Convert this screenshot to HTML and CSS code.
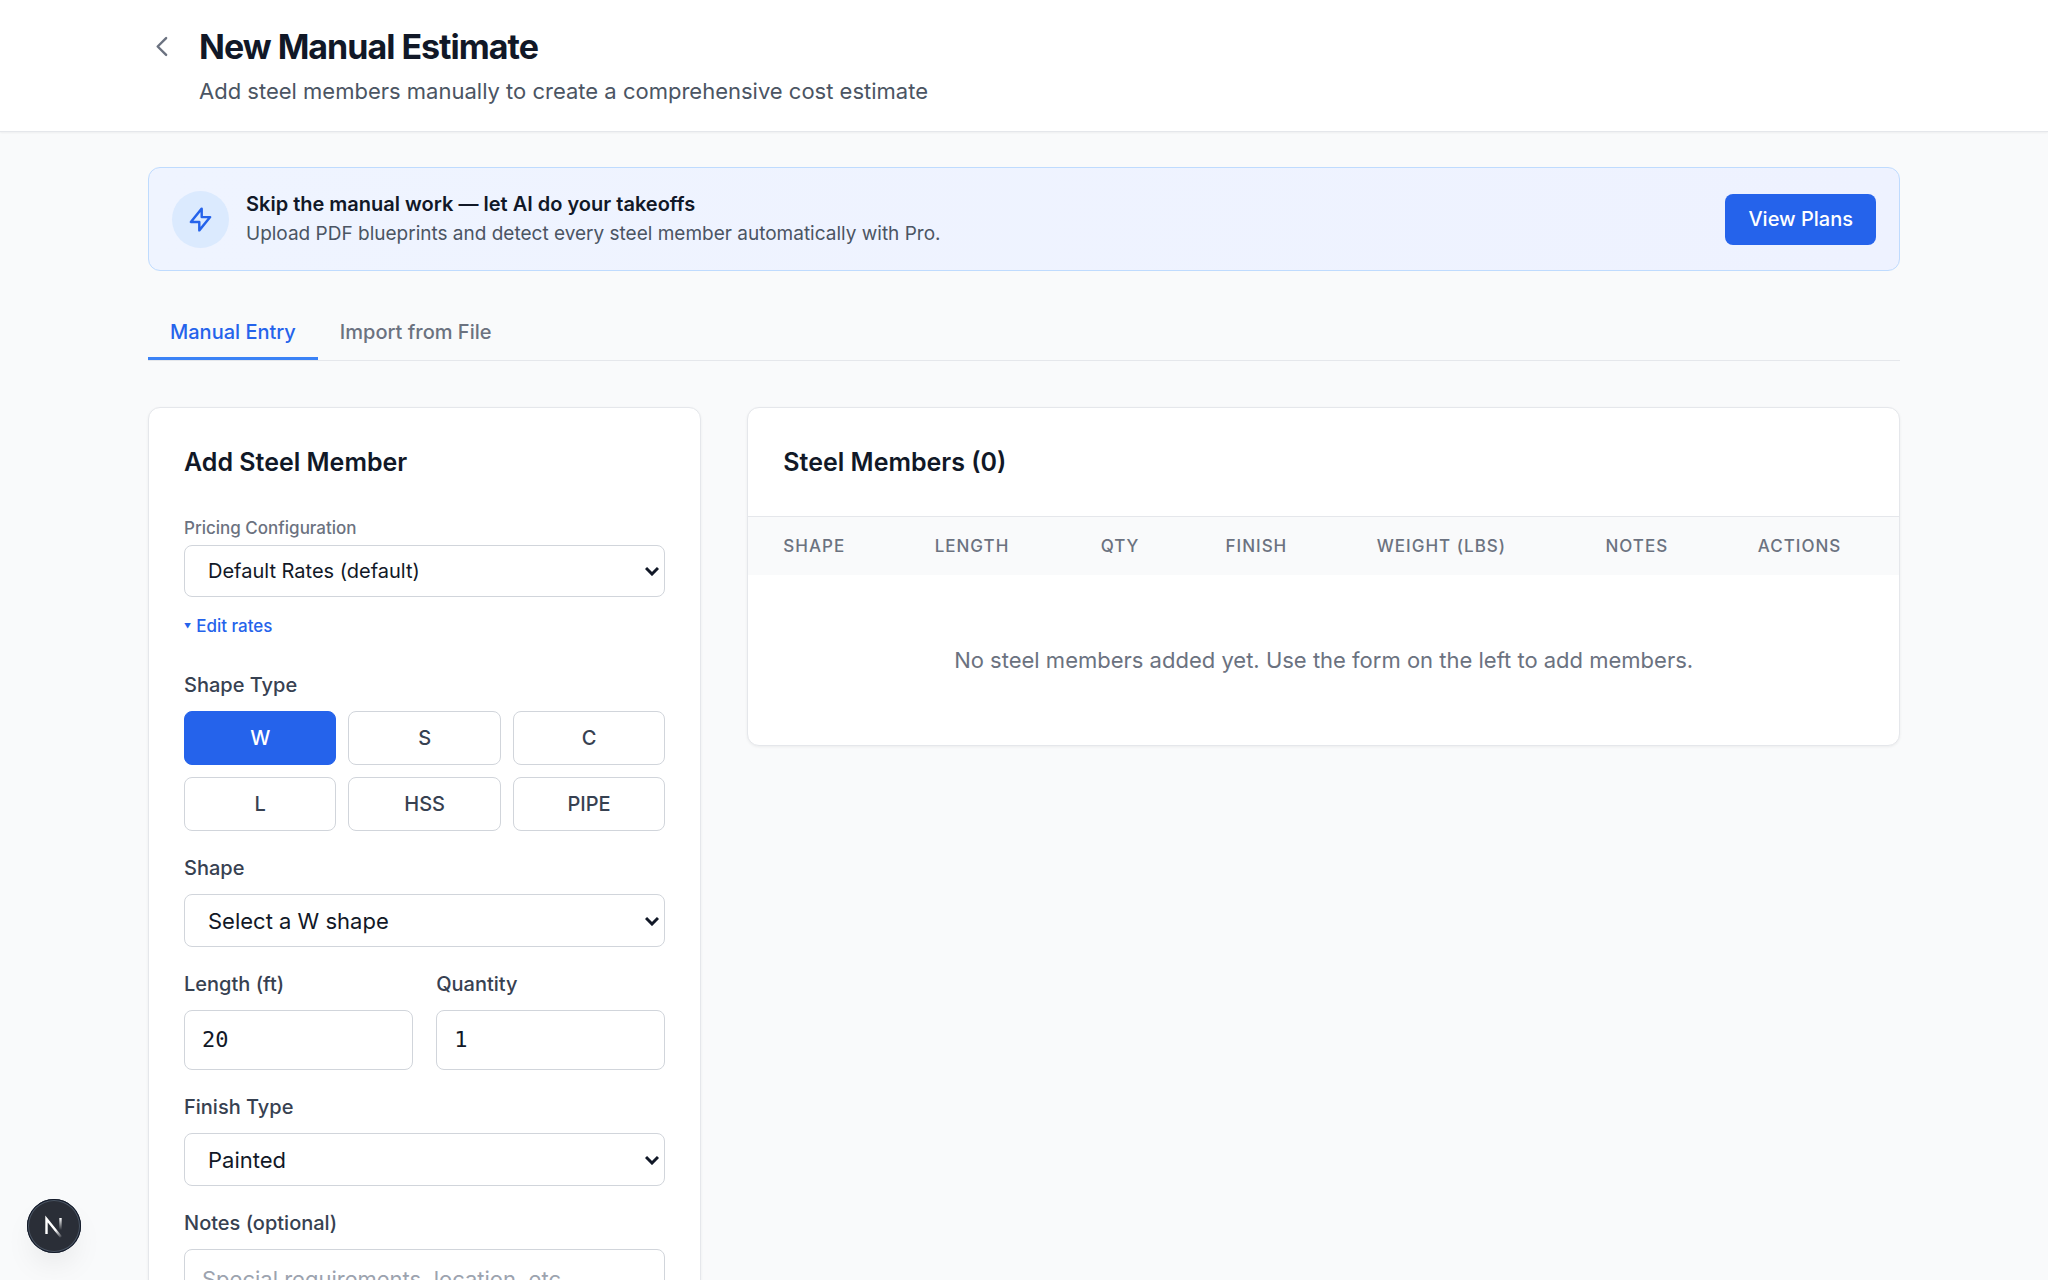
FILE: index.html
```html
<!DOCTYPE html>
<html lang="en">
<head>
    <meta charset="UTF-8">
    <meta name="viewport" content="width=device-width, initial-scale=1.0">
    <title>New Manual Estimate</title>
    <link rel="stylesheet" href="styles.css">
</head>
<body>
    <header class="page-header">
        <div class="container header-inner">
            <a href="#" class="back-link" aria-label="Back">
                <svg width="29" height="29" viewBox="0 0 24 24" fill="none" stroke="currentColor" stroke-width="2" stroke-linecap="round" stroke-linejoin="round"><path d="M15 19l-7-7 7-7"/></svg>
            </a>
            <div>
                <h1>New Manual Estimate</h1>
                <p class="subtitle">Add steel members manually to create a comprehensive cost estimate</p>
            </div>
        </div>
    </header>

    <main class="container">
        <section class="banner">
            <span class="banner-icon">
                <svg width="29" height="29" viewBox="0 0 24 24" fill="none" stroke="currentColor" stroke-width="2" stroke-linecap="round" stroke-linejoin="round"><path d="M13 10V3L4 14h7v7l9-11h-7z"/></svg>
            </span>
            <div class="banner-text">
                <p class="banner-title">Skip the manual work — let AI do your takeoffs</p>
                <p>Upload PDF blueprints and detect every steel member automatically with Pro.</p>
            </div>
            <a href="#" class="plans-link">View Plans</a>
        </section>

        <nav class="tabs">
            <button type="button" class="tab active">Manual Entry</button>
            <button type="button" class="tab">Import from File</button>
        </nav>

        <div class="columns">
            <form class="card form-card">
                <h2>Add Steel Member</h2>

                <label class="small-label" for="pricing">Pricing Configuration</label>
                <select id="pricing" class="pricing-select">
                    <option>Default Rates (default)</option>
                </select>
                <button type="button" class="edit-rates"><span class="caret">▼</span>Edit rates</button>

                <div class="field">
                    <span class="label" id="shape-type">Shape Type</span>
                    <div class="shape-grid" role="group" aria-labelledby="shape-type">
                        <button type="button" class="shape-btn selected">W</button>
                        <button type="button" class="shape-btn">S</button>
                        <button type="button" class="shape-btn">C</button>
                        <button type="button" class="shape-btn">L</button>
                        <button type="button" class="shape-btn">HSS</button>
                        <button type="button" class="shape-btn">PIPE</button>
                    </div>
                </div>

                <div class="field">
                    <label class="label" for="shape">Shape</label>
                    <select id="shape">
                        <option>Select a W shape</option>
                    </select>
                </div>

                <div class="field-row">
                    <div class="field">
                        <label class="label" for="length">Length (ft)</label>
                        <input type="text" inputmode="decimal" id="length" value="20">
                    </div>
                    <div class="field">
                        <label class="label" for="quantity">Quantity</label>
                        <input type="text" inputmode="numeric" id="quantity" value="1">
                    </div>
                </div>

                <div class="field">
                    <label class="label" for="finish">Finish Type</label>
                    <select id="finish">
                        <option>Painted</option>
                        <option>Galvanized</option>
                    </select>
                </div>

                <div class="field">
                    <label class="label" for="notes">Notes (optional)</label>
                    <textarea id="notes" rows="3" placeholder="Special requirements, location, etc."></textarea>
                </div>
            </form>

            <section class="card members-card">
                <h2>Steel Members (0)</h2>
                <table>
                    <thead>
                        <tr>
                            <th>SHAPE</th>
                            <th>LENGTH</th>
                            <th>QTY</th>
                            <th>FINISH</th>
                            <th>WEIGHT (LBS)</th>
                            <th>NOTES</th>
                            <th>ACTIONS</th>
                        </tr>
                    </thead>
                    <tbody>
                        <tr>
                            <td colspan="7">No steel members added yet. Use the form on the left to add members.</td>
                        </tr>
                    </tbody>
                </table>
            </section>
        </div>
    </main>

    <button type="button" class="dev-badge" aria-label="Open dev tools">
        <svg width="54" height="54" viewBox="0 0 54 54" fill="none">
            <defs>
                <linearGradient id="diag" x1="30" y1="30" x2="36" y2="38" gradientUnits="userSpaceOnUse">
                    <stop stop-color="#fff"/>
                    <stop offset="1" stop-color="#fff" stop-opacity="0"/>
                </linearGradient>
                <linearGradient id="stem" x1="33" y1="19" x2="33" y2="31" gradientUnits="userSpaceOnUse">
                    <stop stop-color="#fff"/>
                    <stop offset="1" stop-color="#fff" stop-opacity="0"/>
                </linearGradient>
            </defs>
            <path d="M19.500 35V20L34 38" stroke="url(#diag)" stroke-width="2.400"/>
            <path d="M33.500 19v13" stroke="url(#stem)" stroke-width="2.400"/>
        </svg>
    </button>
</body>
</html>
```
FILE: styles.css
```css
* {
    box-sizing: border-box;
}
body {
    margin: 0;
    background-color: #f9fafb;
    color: #111827;
    font-family: Inter, "Liberation Sans", sans-serif;
    font-size: 22px;
    line-height: 35px;
}
h1, h2, p {
    margin: 0;
}
button, select, input, textarea {
    font: inherit;
    color: inherit;
}
button {
    cursor: pointer;
}
.container {
    width: 86%;
    max-width: 1752px;
    margin: 0 auto;
}

/* header */
.page-header {
    background: #fff;
    border-bottom: 1px solid #e5e7eb;
    box-shadow: 0 1px 2px rgba(0, 0, 0, 0.05);
    padding: 23px 0 22px;
}
.header-inner {
    display: flex;
    align-items: flex-start;
    gap: 22px;
}
.back-link {
    display: flex;
    align-items: center;
    height: 46px;
    color: #6b7280;
}
h1 {
    font-size: 34px;
    line-height: 47px;
    font-weight: 700;
    letter-spacing: -1px;
}
.subtitle {
    margin-top: 4px;
    color: #4b5563;
}

/* upgrade banner */
.banner {
    display: flex;
    align-items: center;
    gap: 17px;
    margin-top: 35px;
    padding: 22px 23px;
    border: 1px solid #bfdbfe;
    border-radius: 12px;
    background: linear-gradient(to right, #eff4ff, #eef2ff);
    font-size: 19px;
    line-height: 29px;
    color: #4b5563;
}
.banner-icon {
    display: flex;
    align-items: center;
    justify-content: center;
    width: 57px;
    height: 57px;
    border-radius: 50%;
    background: #dbeafe;
    color: #2563eb;
}
.banner-text {
    flex: 1;
}
.banner-title {
    font-size: 20px;
    font-weight: 600;
    color: #111827;
}
.plans-link {
    padding: 11px 23px;
    border-radius: 8px;
    background: #2563eb;
    color: #fff;
    font-size: 20px;
    font-weight: 500;
    text-decoration: none;
}

/* tabs */
.tabs {
    display: flex;
    margin: 35px 0 46px;
    border-bottom: 1px solid #e5e7eb;
}
.tab {
    padding: 12px 22px 10px;
    border: none;
    border-bottom: 3px solid transparent;
    background: none;
    font-size: 20px;
    line-height: 29px;
    font-weight: 500;
    color: #6b7280;
}
.tab.active {
    border-bottom-color: #3b82f6;
    color: #2563eb;
}

/* cards */
.columns {
    display: grid;
    grid-template-columns: repeat(3, 1fr);
    gap: 46px;
    align-items: start;
    padding-bottom: 46px;
}
.card {
    background: #fff;
    border: 1px solid #e5e7eb;
    border-radius: 12px;
    box-shadow: 0 1px 3px rgba(0, 0, 0, 0.06);
}
h2 {
    font-size: 25px;
    line-height: 38px;
    font-weight: 600;
}
.form-card {
    padding: 35px;
}
.members-card {
    grid-column: span 2;
    overflow: hidden;
}
.members-card h2 {
    padding: 35px;
    border-bottom: 1px solid #e5e7eb;
}

/* form */
.small-label {
    display: block;
    margin: 34px 0 3px;
    font-size: 17px;
    line-height: 27px;
    font-weight: 500;
    color: #6b7280;
}
.label {
    display: block;
    margin-bottom: 11px;
    font-size: 20px;
    line-height: 29px;
    font-weight: 500;
    color: #374151;
}
.field {
    margin-top: 23px;
}
.field-row {
    display: grid;
    grid-template-columns: 1fr 1fr;
    gap: 23px;
}
select, input, textarea {
    display: block;
    width: 100%;
    border: 1px solid #d1d5db;
    border-radius: 8px;
    background-color: #fff;
}
select {
    height: 53px;
    padding: 1px 35px 0 23px;
    appearance: none;
    background-image: url("data:image/svg+xml,%3Csvg xmlns='http://www.w3.org/2000/svg' width='14' height='10' fill='none' stroke='%23111827' stroke-width='3'%3E%3Cpath d='M1 2l6 6 6-6'/%3E%3C/svg%3E");
    background-repeat: no-repeat;
    background-position: right 5px center;
}
.pricing-select {
    height: 52px;
    font-size: 20px;
}
input {
    height: 60px;
    padding: 0 17px 2px;
    font-family: "DejaVu Sans Mono", monospace;
}
textarea {
    padding: 12px 17px;
    resize: none;
}
textarea::placeholder {
    color: #9ca3af;
}
.edit-rates {
    display: flex;
    align-items: center;
    gap: 5px;
    margin: 16px 0 31px;
    padding: 0;
    border: none;
    background: none;
    font-size: 17px;
    line-height: 27px;
    font-weight: 500;
    color: #2563eb;
}
.caret {
    font-size: 7px;
}
.shape-grid {
    display: grid;
    grid-template-columns: repeat(3, 1fr);
    gap: 12px;
}
.shape-btn {
    height: 54px;
    padding: 0;
    border: 1px solid #d1d5db;
    border-radius: 8px;
    background: #fff;
    font-size: 20px;
    font-weight: 500;
    color: #374151;
}
.shape-btn.selected {
    background: #2563eb;
    border-color: #2563eb;
    color: #fff;
}

/* members table */
table {
    width: 100%;
    border-collapse: collapse;
}
th {
    padding: 18px 35px 17px;
    background: #f9fafb;
    font-size: 17px;
    line-height: 23px;
    font-weight: 500;
    letter-spacing: 1px;
    text-align: left;
    color: #6b7280;
}
td {
    padding: 68px 35px 67px;
    text-align: center;
    color: #6b7280;
}

.dev-badge {
    position: fixed;
    left: 27px;
    bottom: 27px;
    width: 54px;
    height: 54px;
    padding: 0;
    border: none;
    border-radius: 50%;
    background: #2a2e37;
    box-shadow: 0 0 0 1px #111827 inset, 0 0 0 2px #4b5563 inset, 0 16px 32px -8px rgba(0, 0, 0, 0.1);
}
.dev-badge svg {
    display: block;
}
```
